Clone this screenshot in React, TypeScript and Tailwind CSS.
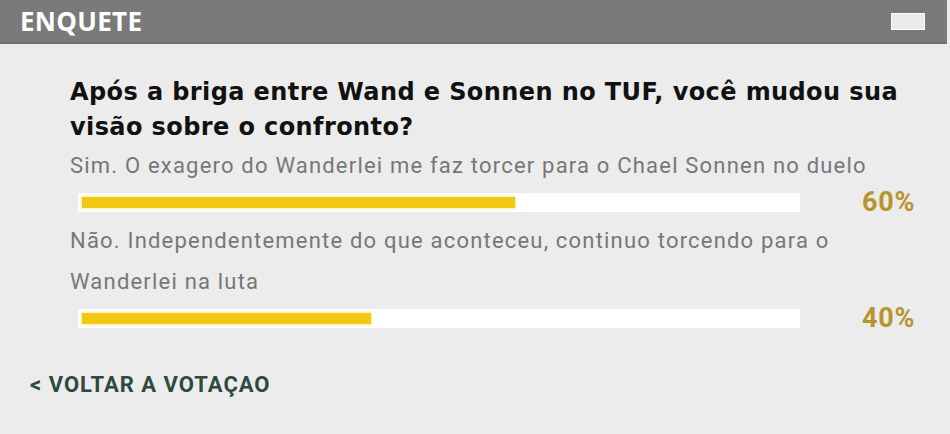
import React from "react";

const options = [
  { text: "Sim. O exagero do Wanderlei me faz torcer para o Chael Sonnen no duelo", pct: 60 },
  { text: "Não. Independentemente do que aconteceu, continuo torcendo para o Wanderlei na luta", pct: 40 },
];

export default function App() {
  return (
    <div className="w-[950px] h-[434px] bg-[#ececec] overflow-hidden flex flex-col">
      <div className="h-[44px] w-[947px] bg-[#7a7a7a] border-b-2 border-[#6e6e6e] flex items-center justify-between pl-[20px] pr-[22px] shrink-0">
        <span
          className="text-white font-bold text-[26px] leading-none tracking-[0.3px]"
          style={{ fontFamily: '"Open Sans", "DejaVu Sans", sans-serif' }}
        >
          ENQUETE
        </span>
        <div className="w-[34px] h-[17px] bg-[#ebebeb] border border-white" />
      </div>
      <div className="pl-[70px] pt-[31px]">
        <h1
          className="text-[24px] leading-[35px] font-bold text-[#111] w-[850px] tracking-[0.4px]"
          style={{ fontFamily: '"DejaVu Sans", sans-serif' }}
        >
          Após a briga entre Wand e Sonnen no TUF, você mudou sua visão sobre o confronto?
        </h1>
        {options.map((o, i) => (
          <div key={i}>
            <p
              className="text-[22px] leading-[41px] text-[#777777] w-[800px] tracking-[1.2px]"
              style={{ fontFamily: 'Roboto, "Liberation Sans", sans-serif' }}
            >
              {o.text}
            </p>
            <div className="flex items-center h-[19px] mt-[7px] mb-[8px] ml-[8px]">
              <div className="w-[722px] h-[19px] bg-white p-[4px]">
                <div
                  className="h-full bg-[#f3c813] shadow-[0_0_2px_1px_#fbeea0]"
                  style={{ width: `${o.pct * 7.22}px` }}
                />
              </div>
              <span
                className="ml-[62px] text-[27px] font-bold text-[#b8942e] leading-none tracking-[0.7px]"
                style={{ fontFamily: 'Roboto, "Liberation Sans", sans-serif' }}
              >
                {o.pct}%
              </span>
            </div>
          </div>
        ))}
      </div>
      <div
        className="pl-[30px] mt-[38px] text-[22px] font-bold text-[#2d4a3c] leading-none tracking-[1px]"
        style={{ fontFamily: 'Roboto, "Liberation Sans", sans-serif' }}
      >
        &lt; VOLTAR A VOTAÇAO
      </div>
    </div>
  );
}
